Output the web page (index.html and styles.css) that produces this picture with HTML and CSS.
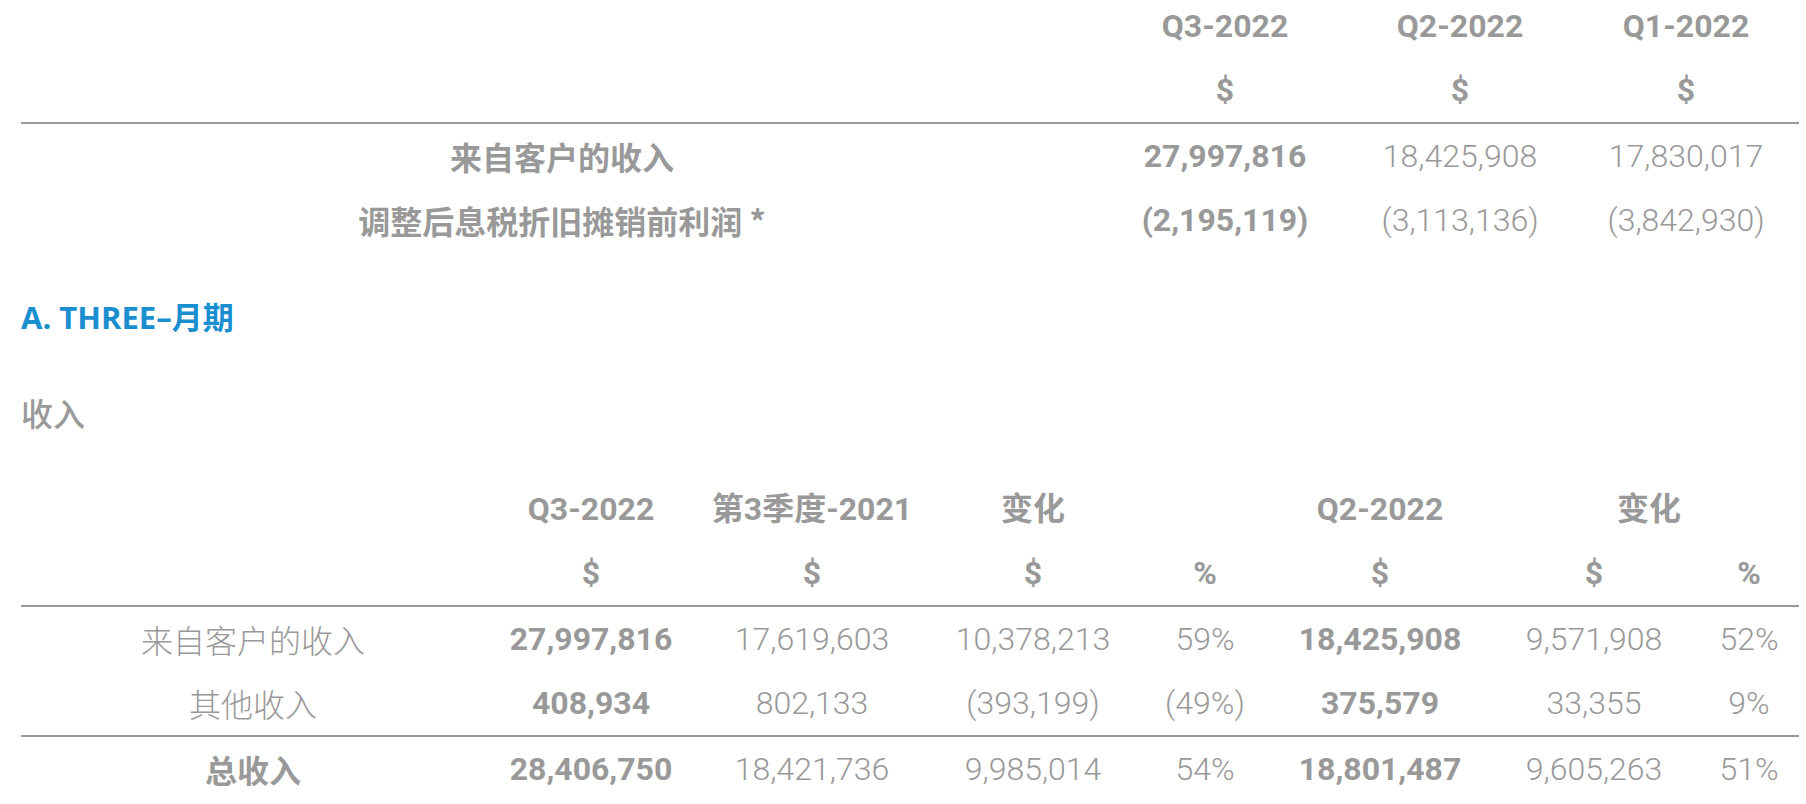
FILE: index.html
```html
<!DOCTYPE html>
<html lang="zh">
<head>
<meta charset="utf-8">
<title>Financial summary</title>
<link rel="stylesheet" href="styles.css">
</head>
<body>
<div class="page">
  <table class="fin summary">
    <colgroup>
      <col class="c-label-top"><col class="c-a"><col class="c-b"><col class="c-b">
    </colgroup>
    <thead>
      <tr><th></th><th>Q3-2022</th><th>Q2-2022</th><th>Q1-2022</th></tr>
      <tr class="rule"><th></th><th>$</th><th>$</th><th>$</th></tr>
    </thead>
    <tbody>
      <tr><td class="lbl strong">来自客户的收入</td><td class="strong">27,997,816</td><td>18,425,908</td><td>17,830,017</td></tr>
      <tr><td class="lbl strong">调整后息税折旧摊销前利润 *</td><td class="strong">(2,195,119)</td><td>(3,113,136)</td><td>(3,842,930)</td></tr>
    </tbody>
  </table>

  <h2 class="section-title">A. THREE–月期</h2>
  <h3 class="sub-title">收入</h3>

  <table class="fin detail">
    <colgroup>
      <col class="d-label"><col class="d-1"><col class="d-2"><col class="d-3"><col class="d-4"><col class="d-5"><col class="d-6"><col class="d-7">
    </colgroup>
    <thead>
      <tr><th></th><th>Q3-2022</th><th>第3季度-2021</th><th>变化</th><th></th><th>Q2-2022</th><th colspan="2" class="span-change">变化</th></tr>
      <tr class="rule"><th></th><th>$</th><th>$</th><th>$</th><th>%</th><th>$</th><th>$</th><th>%</th></tr>
    </thead>
    <tbody>
      <tr><td class="lbl">来自客户的收入</td><td class="strong">27,997,816</td><td>17,619,603</td><td>10,378,213</td><td>59%</td><td class="strong">18,425,908</td><td>9,571,908</td><td>52%</td></tr>
      <tr class="rule"><td class="lbl">其他收入</td><td class="strong">408,934</td><td>802,133</td><td>(393,199)</td><td>(49%)</td><td class="strong">375,579</td><td>33,355</td><td>9%</td></tr>
      <tr><td class="lbl strong">总收入</td><td class="strong">28,406,750</td><td>18,421,736</td><td>9,985,014</td><td>54%</td><td class="strong">18,801,487</td><td>9,605,263</td><td>51%</td></tr>
    </tbody>
  </table>
</div>
</body>
</html>
```
FILE: styles.css
```css
html, body {
  margin: 0;
  padding: 0;
  background: #ffffff;
}
body {
  font-family: "Roboto", "Noto Sans CJK SC", sans-serif;
  color: #999999;
  overflow: hidden;
}
.page {
  padding: 0 7px 0 21px;
  margin-top: -6px;
}
.fin {
  width: 1778px;
  border-collapse: collapse;
  table-layout: fixed;
  font-size: 32px;
}
.fin th, .fin td {
  height: 64px;
  padding: 0;
  text-align: center;
  vertical-align: middle;
  white-space: nowrap;
  line-height: 1;
}
.fin th {
  font-weight: 700;
}
.fin td {
  font-weight: 300;
}
.fin td.strong {
  font-weight: 700;
}
.fin .lbl {
  font-family: "Noto Sans CJK SC", "Roboto", sans-serif;
}
.fin .lbl.strong {
  font-weight: 700;
}
.fin tr.rule th, .fin tr.rule td {
  border-bottom: 2px solid #999999;
}
.fin th.span-change {
  padding-left: 10px;
}
.c-label-top { width: 1082px; }
.c-a { width: 244px; }
.c-b { width: 226px; }

.d-label { width: 464px; }
.d-1 { width: 212px; }
.d-2 { width: 230px; }
.d-3 { width: 212px; }
.d-4 { width: 132px; }
.d-5 { width: 218px; }
.d-6 { width: 210px; }
.d-7 { width: 100px; }

.section-title {
  margin: 33px 0 0;
  height: 64px;
  line-height: 64px;
  font-family: "Open Sans", "Noto Sans CJK SC", sans-serif;
  font-weight: 700;
  font-size: 31px;
  color: #1a8fd0;
}
.sub-title {
  margin: 31px 0 0;
  height: 64px;
  line-height: 64px;
  font-family: "Noto Sans CJK SC", sans-serif;
  font-weight: 500;
  font-size: 32px;
  color: #999999;
}
.detail {
  margin-top: 33px;
}
```
